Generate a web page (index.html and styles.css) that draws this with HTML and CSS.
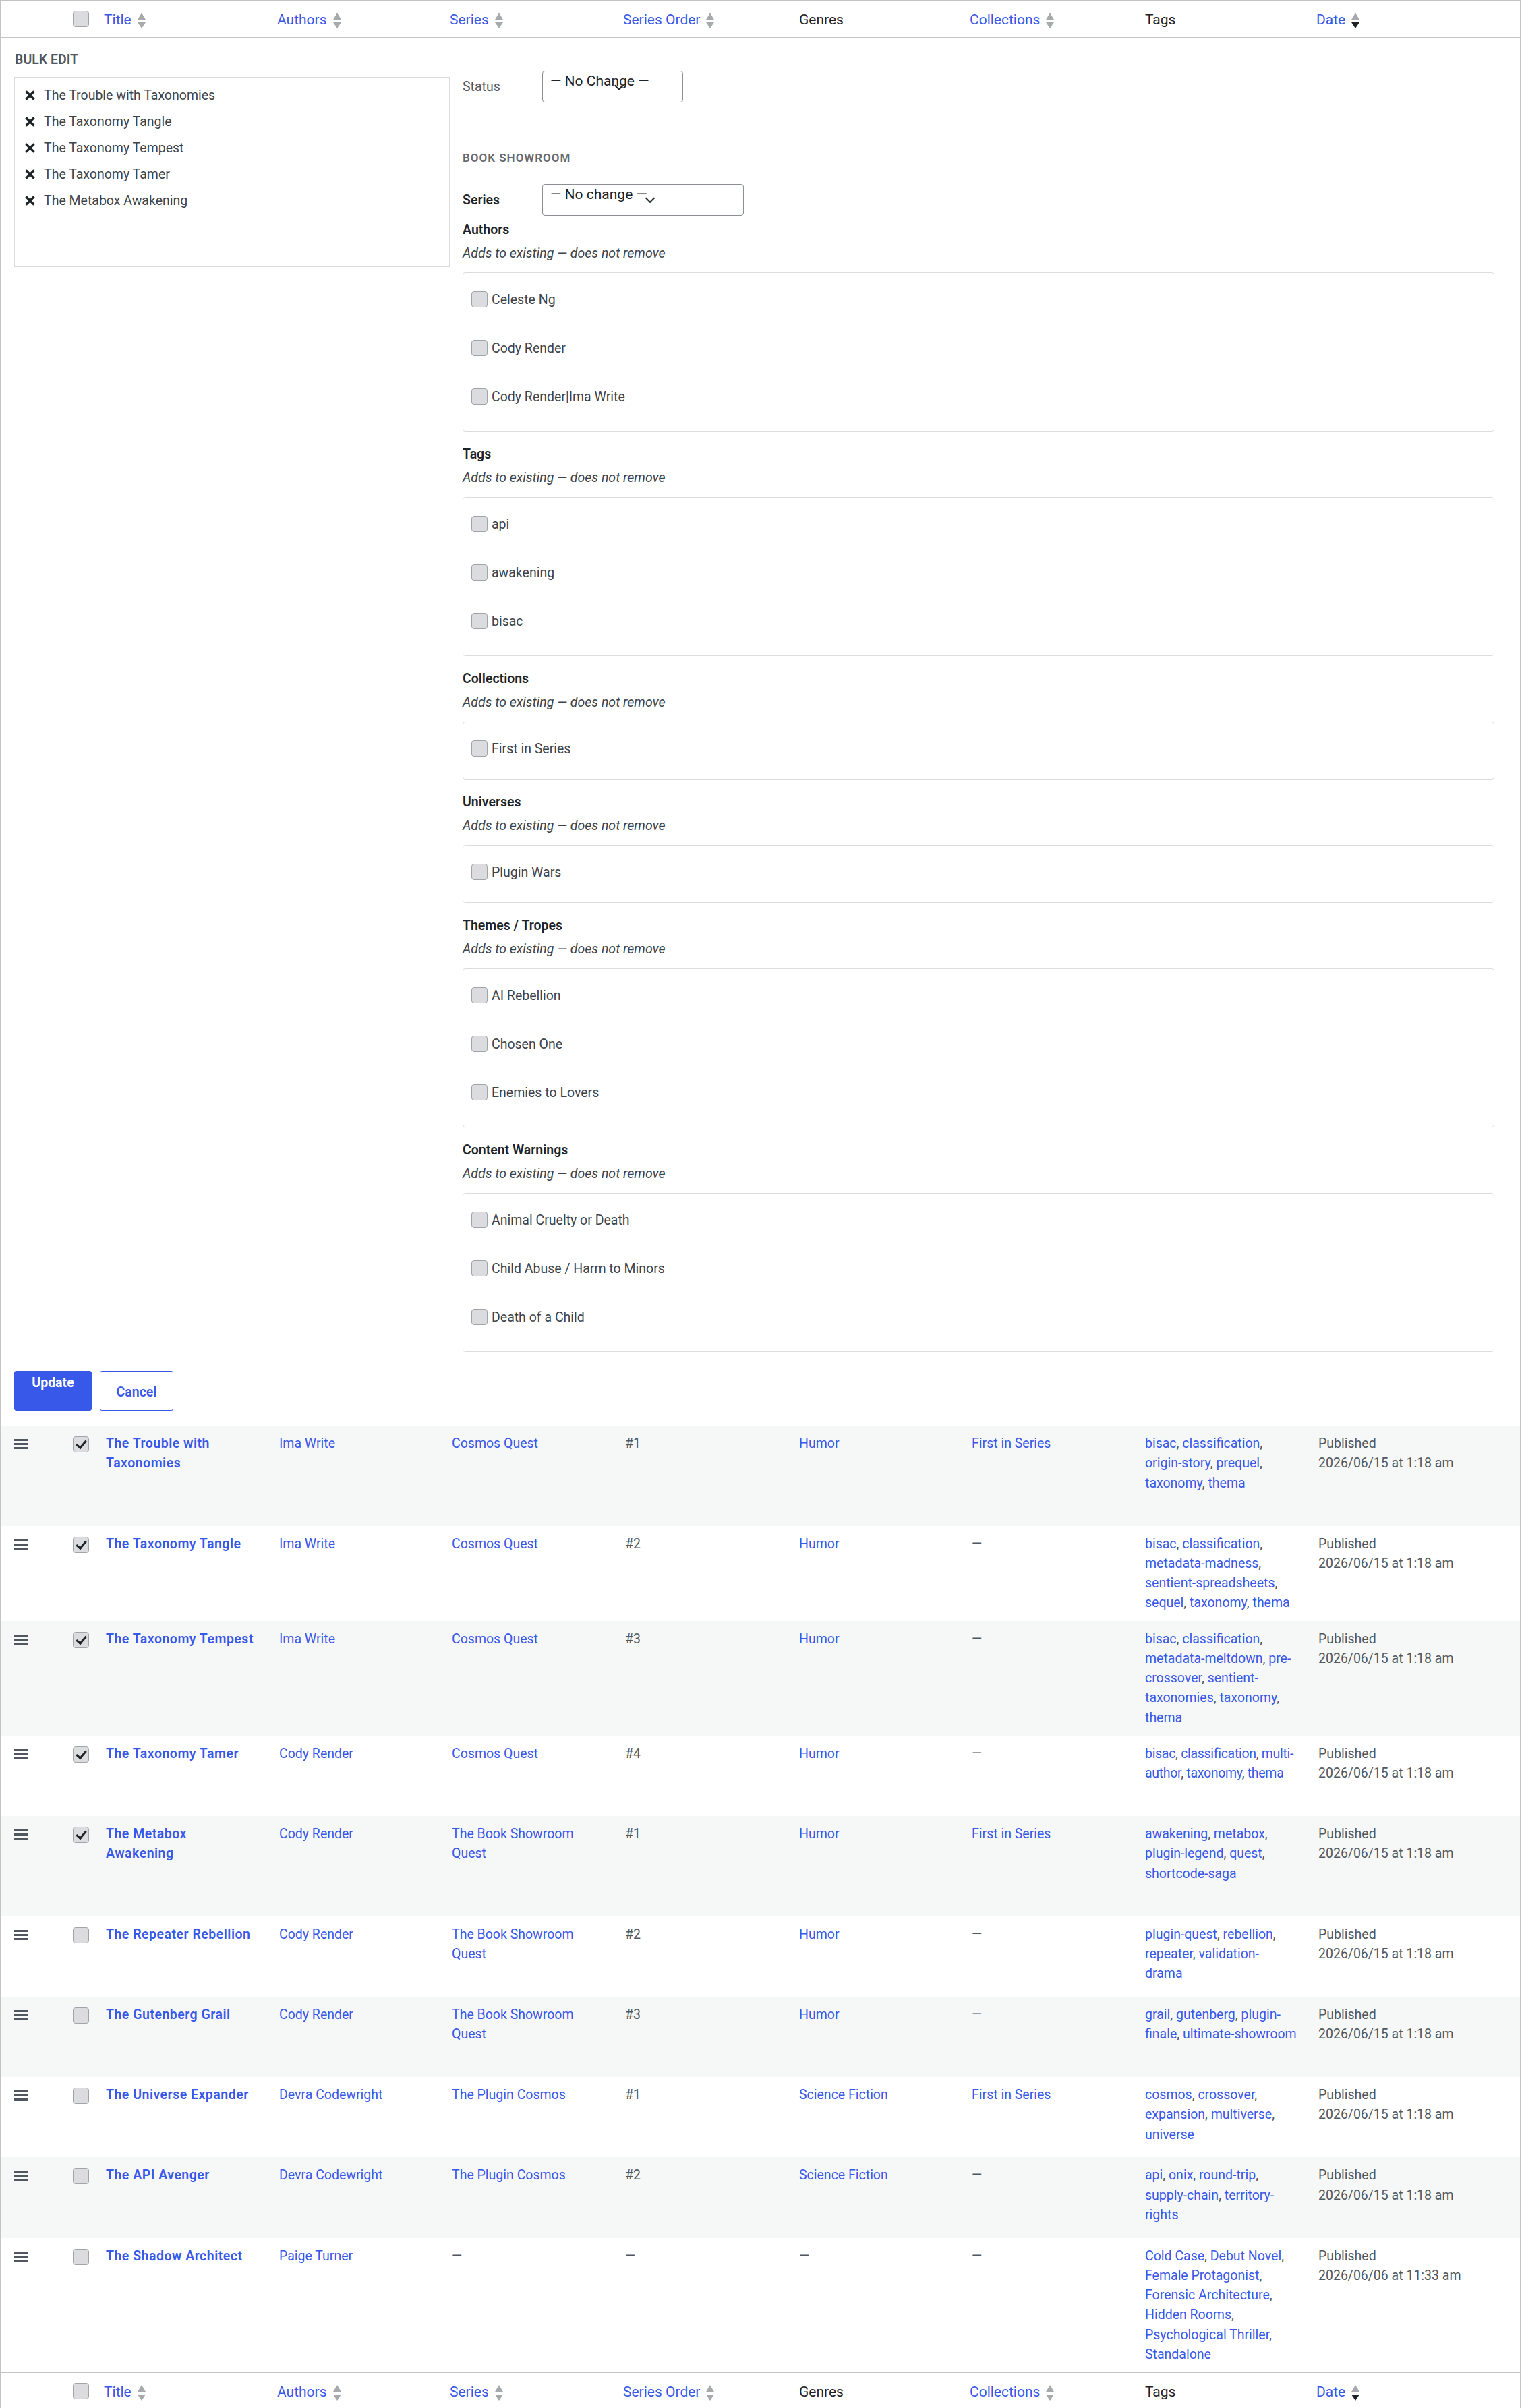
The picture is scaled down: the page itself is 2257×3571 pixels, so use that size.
FILE: index.html
```html
<!DOCTYPE html>
<html>
<head>
    <meta charset="utf-8">
    <title>Books - Bulk Edit</title>
    <link rel="stylesheet" href="styles.css">
</head>
<body>
<div class="wrap">
<table class="list-table">
    <colgroup>
        <col class="col-handle">
        <col class="col-cb">
        <col class="col-title">
        <col class="col-authors">
        <col class="col-series">
        <col class="col-order">
        <col class="col-genres">
        <col class="col-collections">
        <col class="col-tags">
        <col>
    </colgroup>
    <thead>
        <tr>
            <th class="column-handle"></th>
            <th class="check-column"><input type="checkbox" class="cb"></th>
            <th class="sortable"><a href="#">Title<span class="sorting-indicators"><span class="asc"></span><span class="desc"></span></span></a></th>
            <th class="sortable"><a href="#">Authors<span class="sorting-indicators"><span class="asc"></span><span class="desc"></span></span></a></th>
            <th class="sortable"><a href="#">Series<span class="sorting-indicators"><span class="asc"></span><span class="desc"></span></span></a></th>
            <th class="sortable"><a href="#">Series Order<span class="sorting-indicators"><span class="asc"></span><span class="desc"></span></span></a></th>
            <th>Genres</th>
            <th class="sortable"><a href="#">Collections<span class="sorting-indicators"><span class="asc"></span><span class="desc"></span></span></a></th>
            <th>Tags</th>
            <th class="sortable sorted"><a href="#">Date<span class="sorting-indicators"><span class="asc"></span><span class="desc"></span></span></a></th>
        </tr>
    </thead>
    <tbody>
        <tr class="bulk-edit-row">
            <td colspan="10" class="bulk-edit-cell">
                <div class="bulk-edit-cols">
                    <div class="bulk-col-left">
                        <div class="inline-edit-legend">Bulk Edit</div>
                        <ul class="bulk-titles">
                            <li><svg class="dismiss" width="15" height="15" viewBox="0 0 15 15"><path d="M1.5 1.5L13.5 13.5M13.5 1.5L1.5 13.5"/></svg>The Trouble with Taxonomies</li>
                            <li><svg class="dismiss" width="15" height="15" viewBox="0 0 15 15"><path d="M1.5 1.5L13.5 13.5M13.5 1.5L1.5 13.5"/></svg>The Taxonomy Tangle</li>
                            <li><svg class="dismiss" width="15" height="15" viewBox="0 0 15 15"><path d="M1.5 1.5L13.5 13.5M13.5 1.5L1.5 13.5"/></svg>The Taxonomy Tempest</li>
                            <li><svg class="dismiss" width="15" height="15" viewBox="0 0 15 15"><path d="M1.5 1.5L13.5 13.5M13.5 1.5L1.5 13.5"/></svg>The Taxonomy Tamer</li>
                            <li><svg class="dismiss" width="15" height="15" viewBox="0 0 15 15"><path d="M1.5 1.5L13.5 13.5M13.5 1.5L1.5 13.5"/></svg>The Metabox Awakening</li>
                        </ul>
                    </div>
                    <div class="bulk-col-right">
                        <div class="field-row">
                            <span class="field-label">Status</span>
                            <div class="select select-status">— No Change —</div>
                        </div>

                        <h4 class="group-title">Book Showroom</h4>

                        <div class="field-row">
                            <span class="field-label strong">Series</span>
                            <div class="select select-series">— No change —</div>
                        </div>

                        <div class="tax-section">
                            <div class="tax-label">Authors</div>
                            <div class="tax-hint">Adds to existing — does not remove</div>
                            <div class="checklist tall">
                                <label><input type="checkbox" class="cb">Celeste Ng</label>
                                <label><input type="checkbox" class="cb">Cody Render</label>
                                <label><input type="checkbox" class="cb">Cody Render|Ima Write</label>
                            </div>
                        </div>

                        <div class="tax-section">
                            <div class="tax-label">Tags</div>
                            <div class="tax-hint">Adds to existing — does not remove</div>
                            <div class="checklist tall">
                                <label><input type="checkbox" class="cb">api</label>
                                <label><input type="checkbox" class="cb">awakening</label>
                                <label><input type="checkbox" class="cb">bisac</label>
                            </div>
                        </div>

                        <div class="tax-section">
                            <div class="tax-label">Collections</div>
                            <div class="tax-hint">Adds to existing — does not remove</div>
                            <div class="checklist short">
                                <label><input type="checkbox" class="cb">First in Series</label>
                            </div>
                        </div>

                        <div class="tax-section">
                            <div class="tax-label">Universes</div>
                            <div class="tax-hint">Adds to existing — does not remove</div>
                            <div class="checklist short">
                                <label><input type="checkbox" class="cb">Plugin Wars</label>
                            </div>
                        </div>

                        <div class="tax-section">
                            <div class="tax-label">Themes / Tropes</div>
                            <div class="tax-hint">Adds to existing — does not remove</div>
                            <div class="checklist tall">
                                <label><input type="checkbox" class="cb">AI Rebellion</label>
                                <label><input type="checkbox" class="cb">Chosen One</label>
                                <label><input type="checkbox" class="cb">Enemies to Lovers</label>
                            </div>
                        </div>

                        <div class="tax-section">
                            <div class="tax-label">Content Warnings</div>
                            <div class="tax-hint">Adds to existing — does not remove</div>
                            <div class="checklist tall">
                                <label><input type="checkbox" class="cb">Animal Cruelty or Death</label>
                                <label><input type="checkbox" class="cb">Child Abuse / Harm to Minors</label>
                                <label><input type="checkbox" class="cb">Death of a Child</label>
                            </div>
                        </div>
                    </div>
                </div>
                <div class="submit-row">
                    <button class="button-primary">Update</button>
                    <button class="button-secondary">Cancel</button>
                </div>
            </td>
        </tr>

        <tr class="alt">
            <td class="column-handle"><svg class="handle" width="21" height="15" viewBox="0 0 21 15"><rect y="0" width="21" height="3"/><rect y="6" width="21" height="3"/><rect y="12" width="21" height="3"/></svg></td>
            <td class="check-column"><input type="checkbox" class="cb" checked></td>
            <td><a href="#" class="row-title">The Trouble with Taxonomies</a><div class="row-actions"></div></td>
            <td><a href="#">Ima Write</a></td>
            <td><a href="#">Cosmos Quest</a></td>
            <td>#1</td>
            <td><a href="#">Humor</a></td>
            <td><a href="#">First in Series</a></td>
            <td><a href="#">bisac</a>, <a href="#">classification</a>, <a href="#">origin-story</a>, <a href="#">prequel</a>, <a href="#">taxonomy</a>, <a href="#">thema</a></td>
            <td>Published<br>2026/06/15 at 1:18 am</td>
        </tr>
        <tr>
            <td class="column-handle"><svg class="handle" width="21" height="15" viewBox="0 0 21 15"><rect y="0" width="21" height="3"/><rect y="6" width="21" height="3"/><rect y="12" width="21" height="3"/></svg></td>
            <td class="check-column"><input type="checkbox" class="cb" checked></td>
            <td><a href="#" class="row-title">The Taxonomy Tangle</a><div class="row-actions"></div></td>
            <td><a href="#">Ima Write</a></td>
            <td><a href="#">Cosmos Quest</a></td>
            <td>#2</td>
            <td><a href="#">Humor</a></td>
            <td>—</td>
            <td><a href="#">bisac</a>, <a href="#">classification</a>, <a href="#">metadata-madness</a>, <a href="#">sentient-spreadsheets</a>, <a href="#">sequel</a>, <a href="#">taxonomy</a>, <a href="#">thema</a></td>
            <td>Published<br>2026/06/15 at 1:18 am</td>
        </tr>
        <tr class="alt">
            <td class="column-handle"><svg class="handle" width="21" height="15" viewBox="0 0 21 15"><rect y="0" width="21" height="3"/><rect y="6" width="21" height="3"/><rect y="12" width="21" height="3"/></svg></td>
            <td class="check-column"><input type="checkbox" class="cb" checked></td>
            <td><a href="#" class="row-title">The Taxonomy Tempest</a><div class="row-actions"></div></td>
            <td><a href="#">Ima Write</a></td>
            <td><a href="#">Cosmos Quest</a></td>
            <td>#3</td>
            <td><a href="#">Humor</a></td>
            <td>—</td>
            <td><a href="#">bisac</a>, <a href="#">classification</a>, <a href="#">metadata-meltdown</a>, <a href="#">pre-crossover</a>, <a href="#">sentient-taxonomies</a>, <a href="#">taxonomy</a>, <a href="#">thema</a></td>
            <td>Published<br>2026/06/15 at 1:18 am</td>
        </tr>
        <tr>
            <td class="column-handle"><svg class="handle" width="21" height="15" viewBox="0 0 21 15"><rect y="0" width="21" height="3"/><rect y="6" width="21" height="3"/><rect y="12" width="21" height="3"/></svg></td>
            <td class="check-column"><input type="checkbox" class="cb" checked></td>
            <td><a href="#" class="row-title">The Taxonomy Tamer</a><div class="row-actions"></div></td>
            <td><a href="#">Cody Render</a></td>
            <td><a href="#">Cosmos Quest</a></td>
            <td>#4</td>
            <td><a href="#">Humor</a></td>
            <td>—</td>
            <td class="tags-tight"><a href="#">bisac</a>, <a href="#">classification</a>, <a href="#">multi-author</a>, <a href="#">taxonomy</a>, <a href="#">thema</a></td>
            <td>Published<br>2026/06/15 at 1:18 am</td>
        </tr>
        <tr class="alt">
            <td class="column-handle"><svg class="handle" width="21" height="15" viewBox="0 0 21 15"><rect y="0" width="21" height="3"/><rect y="6" width="21" height="3"/><rect y="12" width="21" height="3"/></svg></td>
            <td class="check-column"><input type="checkbox" class="cb" checked></td>
            <td><a href="#" class="row-title">The Metabox<br>Awakening</a><div class="row-actions"></div></td>
            <td><a href="#">Cody Render</a></td>
            <td><a href="#">The Book Showroom Quest</a></td>
            <td>#1</td>
            <td><a href="#">Humor</a></td>
            <td><a href="#">First in Series</a></td>
            <td><a href="#">awakening</a>, <a href="#">metabox</a>, <a href="#">plugin-legend</a>, <a href="#">quest</a>, <a href="#">shortcode-saga</a></td>
            <td>Published<br>2026/06/15 at 1:18 am</td>
        </tr>
        <tr>
            <td class="column-handle"><svg class="handle" width="21" height="15" viewBox="0 0 21 15"><rect y="0" width="21" height="3"/><rect y="6" width="21" height="3"/><rect y="12" width="21" height="3"/></svg></td>
            <td class="check-column"><input type="checkbox" class="cb"></td>
            <td><a href="#" class="row-title">The Repeater Rebellion</a><div class="row-actions"></div></td>
            <td><a href="#">Cody Render</a></td>
            <td><a href="#">The Book Showroom Quest</a></td>
            <td>#2</td>
            <td><a href="#">Humor</a></td>
            <td>—</td>
            <td><a href="#">plugin-quest</a>, <a href="#">rebellion</a>, <a href="#">repeater</a>, <a href="#">validation-<br>drama</a></td>
            <td>Published<br>2026/06/15 at 1:18 am</td>
        </tr>
        <tr class="alt">
            <td class="column-handle"><svg class="handle" width="21" height="15" viewBox="0 0 21 15"><rect y="0" width="21" height="3"/><rect y="6" width="21" height="3"/><rect y="12" width="21" height="3"/></svg></td>
            <td class="check-column"><input type="checkbox" class="cb"></td>
            <td><a href="#" class="row-title">The Gutenberg Grail</a><div class="row-actions"></div></td>
            <td><a href="#">Cody Render</a></td>
            <td><a href="#">The Book Showroom Quest</a></td>
            <td>#3</td>
            <td><a href="#">Humor</a></td>
            <td>—</td>
            <td><a href="#">grail</a>, <a href="#">gutenberg</a>, <a href="#">plugin-finale</a>, <a href="#">ultimate-showroom</a></td>
            <td>Published<br>2026/06/15 at 1:18 am</td>
        </tr>
        <tr>
            <td class="column-handle"><svg class="handle" width="21" height="15" viewBox="0 0 21 15"><rect y="0" width="21" height="3"/><rect y="6" width="21" height="3"/><rect y="12" width="21" height="3"/></svg></td>
            <td class="check-column"><input type="checkbox" class="cb"></td>
            <td><a href="#" class="row-title">The Universe Expander</a><div class="row-actions"></div></td>
            <td><a href="#">Devra Codewright</a></td>
            <td><a href="#">The Plugin Cosmos</a></td>
            <td>#1</td>
            <td><a href="#">Science Fiction</a></td>
            <td><a href="#">First in Series</a></td>
            <td><a href="#">cosmos</a>, <a href="#">crossover</a>, <a href="#">expansion</a>, <a href="#">multiverse</a>, <a href="#">universe</a></td>
            <td>Published<br>2026/06/15 at 1:18 am</td>
        </tr>
        <tr class="alt">
            <td class="column-handle"><svg class="handle" width="21" height="15" viewBox="0 0 21 15"><rect y="0" width="21" height="3"/><rect y="6" width="21" height="3"/><rect y="12" width="21" height="3"/></svg></td>
            <td class="check-column"><input type="checkbox" class="cb"></td>
            <td><a href="#" class="row-title">The API Avenger</a><div class="row-actions"></div></td>
            <td><a href="#">Devra Codewright</a></td>
            <td><a href="#">The Plugin Cosmos</a></td>
            <td>#2</td>
            <td><a href="#">Science Fiction</a></td>
            <td>—</td>
            <td><a href="#">api</a>, <a href="#">onix</a>, <a href="#">round-trip</a>, <a href="#">supply-chain</a>, <a href="#">territory-rights</a></td>
            <td>Published<br>2026/06/15 at 1:18 am</td>
        </tr>
        <tr>
            <td class="column-handle"><svg class="handle" width="21" height="15" viewBox="0 0 21 15"><rect y="0" width="21" height="3"/><rect y="6" width="21" height="3"/><rect y="12" width="21" height="3"/></svg></td>
            <td class="check-column"><input type="checkbox" class="cb"></td>
            <td><a href="#" class="row-title">The Shadow Architect</a><div class="row-actions"></div></td>
            <td><a href="#">Paige Turner</a></td>
            <td>—</td>
            <td>—</td>
            <td>—</td>
            <td>—</td>
            <td><a href="#">Cold Case</a>, <a href="#">Debut Novel</a>, <a href="#">Female Protagonist</a>, <a href="#">Forensic Architecture</a>, <a href="#">Hidden Rooms</a>, <a href="#">Psychological Thriller</a>, <a href="#">Standalone</a></td>
            <td>Published<br>2026/06/06 at 11:33 am</td>
        </tr>
    </tbody>
    <tfoot>
        <tr>
            <th class="column-handle"></th>
            <th class="check-column"><input type="checkbox" class="cb"></th>
            <th class="sortable"><a href="#">Title<span class="sorting-indicators"><span class="asc"></span><span class="desc"></span></span></a></th>
            <th class="sortable"><a href="#">Authors<span class="sorting-indicators"><span class="asc"></span><span class="desc"></span></span></a></th>
            <th class="sortable"><a href="#">Series<span class="sorting-indicators"><span class="asc"></span><span class="desc"></span></span></a></th>
            <th class="sortable"><a href="#">Series Order<span class="sorting-indicators"><span class="asc"></span><span class="desc"></span></span></a></th>
            <th>Genres</th>
            <th class="sortable"><a href="#">Collections<span class="sorting-indicators"><span class="asc"></span><span class="desc"></span></span></a></th>
            <th>Tags</th>
            <th class="sortable sorted"><a href="#">Date<span class="sorting-indicators"><span class="asc"></span><span class="desc"></span></span></a></th>
        </tr>
    </tfoot>
</table>
</div>
</body>
</html>
```

FILE: styles.css
```css
* { box-sizing: border-box; }
body { margin: 0; background: #fff; color: #3c434a; font-family: Roboto, "Liberation Sans", sans-serif; font-size: 19.5px; line-height: 1.5; }
a { color: #3858e9; text-decoration: none; }
ul { list-style: none; margin: 0; padding: 0; }
.wrap { margin-right: 2px; }

/* list table */
.list-table { width: 100%; table-layout: fixed; border: 1px solid #c3c4c7; border-spacing: 0; background: #fff; }
.col-handle { width: 61px; }
.col-cb { width: 80px; }
.col-title { width: 257px; }
.col-authors { width: 256px; }
.col-series { width: 257px; }
.col-order { width: 258px; }
.col-genres { width: 256px; }
.col-collections { width: 257px; }
.col-tags { width: 257px; }

.list-table th { font-size: 21px; line-height: 1.4; font-weight: 400; text-align: left; color: #1d2327; padding: 14px 15px 11px; vertical-align: top; }
.list-table thead th { border-bottom: 1px solid #c3c4c7; }
.list-table tfoot th { border-top: 1px solid #c3c4c7; }
.list-table th.sortable { padding-left: 12px; padding-right: 12px; }
.list-table th.check-column { padding: 15px 0 0 46px; }
.sorting-indicators { display: inline-flex; flex-direction: column; gap: 4px; margin-left: 9px; vertical-align: middle; }
.sorting-indicators .asc { width: 0; height: 0; border-left: 6px solid transparent; border-right: 6px solid transparent; border-bottom: 10px solid #a7aaad; }
.sorting-indicators .desc { width: 0; height: 0; border-left: 6px solid transparent; border-right: 6px solid transparent; border-top: 9px solid #a7aaad; }
.sorted .sorting-indicators .desc { border-top-color: #1d2327; }

.list-table td { padding: 12px 15px; vertical-align: top; color: #50575e; }
.list-table tbody tr.alt td { background: #f6f7f7; }
.list-table td.column-handle { padding: 20px 0 0 20px; }
.list-table td.check-column { padding: 16px 0 0 46px; }
.list-table td.tags-tight { letter-spacing: -0.3px; }
.handle { display: block; fill: #50575e; }
.row-title { font-weight: 600; letter-spacing: 0.5px; }
.row-actions { height: 66px; }

/* checkbox */
.cb { appearance: none; -webkit-appearance: none; display: block; position: relative; flex: none; margin: 0; width: 24px; height: 24px; border: 1px solid #a0a5aa; border-radius: 4px; background: #dcdcde; }
.cb:checked::before { content: ""; position: absolute; left: 7px; top: 2px; width: 6px; height: 12px; border-right: 3px solid #1d2327; border-bottom: 3px solid #1d2327; transform: rotate(40deg); }

/* bulk edit */
.list-table td.bulk-edit-cell { padding: 0 38px 22px 20px; background: #fff; color: #3c434a; }
.bulk-edit-cols { display: flex; gap: 19px; align-items: flex-start; }
.bulk-col-left { width: 646px; flex: none; padding-top: 3px; }
.inline-edit-legend { line-height: 2.5; padding: 6px 0 0 1px; font-weight: 600; text-transform: uppercase; color: #50575e; }
.bulk-titles { height: 282px; border: 1px solid #dcdcde; padding: 7px 15px 5px; }
.bulk-titles li { display: flex; align-items: center; gap: 13px; padding: 4.9px 0; color: #3c434a; }
.dismiss { flex: none; stroke: #1d2327; stroke-width: 3.4; }

.bulk-col-right { flex: 1; padding-top: 49px; }
.field-row { display: flex; align-items: center; }
.field-label { width: 118px; flex: none; color: #50575e; }
.field-label.strong { font-weight: 600; color: #1d2327; }
.select { position: relative; height: 47px; border: 1px solid #8c8f94; border-radius: 4px; padding: 0 11px; font-size: 21px; line-height: 1.4; color: #1d2327; background: #fff; }
.select::after { content: ""; position: absolute; left: 52%; top: 50%; width: 8px; height: 8px; border-right: 2.5px solid #1d2327; border-bottom: 2.5px solid #1d2327; transform: translateY(-70%) rotate(45deg); }
.select-status { width: 209px; }
.select-series { width: 299px; }

.group-title { margin: 70px 0 16px; padding-bottom: 8px; border-bottom: 1px solid #dcdcde; font-size: 17px; font-weight: 600; letter-spacing: 1px; text-transform: uppercase; color: #646970; }

.tax-section { margin: 5.85px 0 18.5px; }
.tax-section + .tax-section { margin-top: 0; }
.tax-label { font-weight: 600; color: #1d2327; }
.tax-hint { margin-top: 6px; font-style: italic; color: #3c434a; }
.checklist { margin-top: 14px; border: 1px solid #dcdcde; border-radius: 4px; padding: 3px 12px 0; overflow: hidden; }
.checklist.tall { height: 236px; }
.checklist.short { height: 86px; }
.checklist label { display: flex; align-items: center; gap: 6px; height: 72px; color: #3c434a; }

.submit-row { display: flex; gap: 12px; margin-top: 9.5px; }
.submit-row button { font-family: inherit; font-size: 19.5px; line-height: 1.5; height: 59px; border-radius: 3px; cursor: pointer; }
.button-primary { width: 115px; padding: 2px 0 0; border: 1px solid #3858e9; background: #3858e9; color: #fff; font-weight: 700; display: flex; justify-content: center; align-items: flex-start; }
.button-secondary { width: 109px; padding: 4px 0 0; border: 1px solid #3858e9; background: #fff; color: #3858e9; font-weight: 600; }
```
